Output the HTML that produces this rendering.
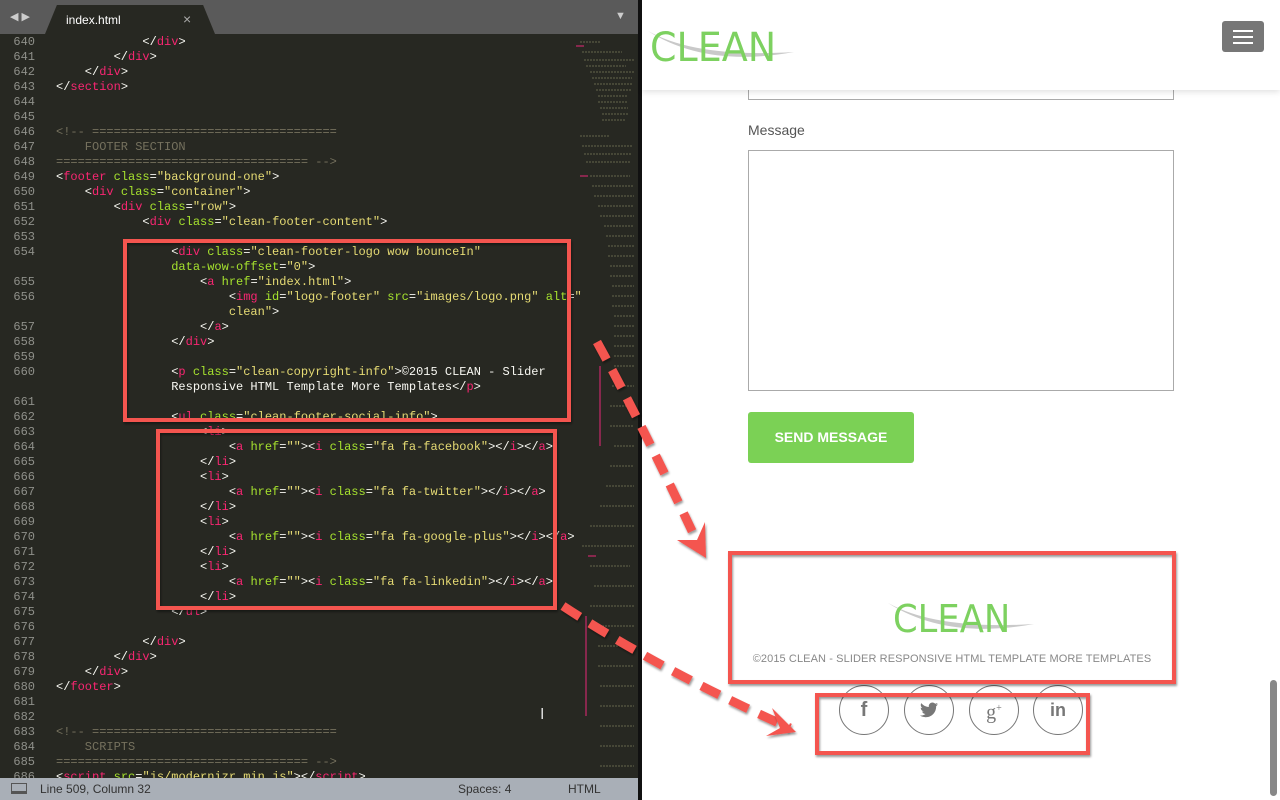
<!DOCTYPE html>
<html><head><meta charset="utf-8"><style>
*{margin:0;padding:0;box-sizing:border-box}
body{width:1280px;height:800px;overflow:hidden;position:relative;background:#fff;font-family:"Liberation Sans",sans-serif}
#ed{position:absolute;left:0;top:0;width:639px;height:800px;background:#272822}
#tabbar{position:absolute;left:0;top:0;width:639px;height:34px;background:#5a5a5a}
#tab{position:absolute;left:45px;top:5px;width:170px;height:29px;background:#272822;clip-path:polygon(7% 0,93% 0,100% 100%,0 100%);}
#tab span{position:absolute;left:21px;top:8px;color:#fff;font-size:12px}
#tab b{position:absolute;left:138px;top:6px;color:#aaa;font-size:14px;font-weight:normal}
.code{position:absolute;left:0;top:35px;font-family:"Liberation Mono",monospace;font-size:12px;line-height:15px;white-space:pre;color:#f8f8f2}
.ln{position:absolute;left:0;width:35px;text-align:right;color:#8f908a}
.tx{position:absolute;left:56px}
.t{color:#f92672}.a{color:#a6e22e}.s{color:#e6db74}.c{color:#75715e}
#status{position:absolute;left:0;top:778px;width:639px;height:22px;background:#a9afb7;font-size:12px;color:#333}
#mini{position:absolute;left:570px;top:36px;width:66px;height:740px;}
#div{position:absolute;left:638px;top:0;width:4px;height:800px;background:#111}
#hdr{position:absolute;left:642px;top:0;width:638px;height:90px;background:#fff;box-shadow:0 2px 6px rgba(0,0,0,.12);z-index:2}
.logo{position:absolute;font-family:"DejaVu Sans",sans-serif;color:#7dd160;letter-spacing:0px}
</style></head><body>
<div id="ed">
<div id="tabbar">
<div style="position:absolute;left:10px;top:10px;color:#ccc;font-size:11px">◀ ▶</div>
<div id="tab"><span>index.html</span><b>×</b></div>
<div style="position:absolute;left:615px;top:10px;color:#ccc;font-size:11px">▼</div>
</div>
<div class="code">
<div class="ln" style="top:0">640
641
642
643
644
645
646
647
648
649
650
651
652
653
654

655
656

657
658
659
660

661
662
663
664
665
666
667
668
669
670
671
672
673
674
675
676
677
678
679
680
681
682
683
684
685
686</div>
<div class="tx" style="top:0">            &lt;/<span class="t">div</span>&gt;
        &lt;/<span class="t">div</span>&gt;
    &lt;/<span class="t">div</span>&gt;
&lt;/<span class="t">section</span>&gt;


<span class="c">&lt;!-- ==================================
    FOOTER SECTION
=================================== --&gt;</span>
&lt;<span class="t">footer</span> <span class="a">class</span>=<span class="s">"background-one"</span>&gt;
    &lt;<span class="t">div</span> <span class="a">class</span>=<span class="s">"container"</span>&gt;
        &lt;<span class="t">div</span> <span class="a">class</span>=<span class="s">"row"</span>&gt;
            &lt;<span class="t">div</span> <span class="a">class</span>=<span class="s">"clean-footer-content"</span>&gt;

                &lt;<span class="t">div</span> <span class="a">class</span>=<span class="s">"clean-footer-logo wow bounceIn"</span>
                <span class="a">data-wow-offset</span>=<span class="s">"0"</span>&gt;
                    &lt;<span class="t">a</span> <span class="a">href</span>=<span class="s">"index.html"</span>&gt;
                        &lt;<span class="t">img</span> <span class="a">id</span>=<span class="s">"logo-footer"</span> <span class="a">src</span>=<span class="s">"images/logo.png"</span> <span class="a">alt</span>=<span class="s">"</span>
<span class="s">                        clean"</span>&gt;
                    &lt;/<span class="t">a</span>&gt;
                &lt;/<span class="t">div</span>&gt;

                &lt;<span class="t">p</span> <span class="a">class</span>=<span class="s">"clean-copyright-info"</span>&gt;©2015 CLEAN - Slider
                Responsive HTML Template More Templates&lt;/<span class="t">p</span>&gt;

                &lt;<span class="t">ul</span> <span class="a">class</span>=<span class="s">"clean-footer-social-info"</span>&gt;
                    &lt;<span class="t">li</span>&gt;
                        &lt;<span class="t">a</span> <span class="a">href</span>=<span class="s">""</span>&gt;&lt;<span class="t">i</span> <span class="a">class</span>=<span class="s">"fa fa-facebook"</span>&gt;&lt;/<span class="t">i</span>&gt;&lt;/<span class="t">a</span>&gt;
                    &lt;/<span class="t">li</span>&gt;
                    &lt;<span class="t">li</span>&gt;
                        &lt;<span class="t">a</span> <span class="a">href</span>=<span class="s">""</span>&gt;&lt;<span class="t">i</span> <span class="a">class</span>=<span class="s">"fa fa-twitter"</span>&gt;&lt;/<span class="t">i</span>&gt;&lt;/<span class="t">a</span>&gt;
                    &lt;/<span class="t">li</span>&gt;
                    &lt;<span class="t">li</span>&gt;
                        &lt;<span class="t">a</span> <span class="a">href</span>=<span class="s">""</span>&gt;&lt;<span class="t">i</span> <span class="a">class</span>=<span class="s">"fa fa-google-plus"</span>&gt;&lt;/<span class="t">i</span>&gt;&lt;/<span class="t">a</span>&gt;
                    &lt;/<span class="t">li</span>&gt;
                    &lt;<span class="t">li</span>&gt;
                        &lt;<span class="t">a</span> <span class="a">href</span>=<span class="s">""</span>&gt;&lt;<span class="t">i</span> <span class="a">class</span>=<span class="s">"fa fa-linkedin"</span>&gt;&lt;/<span class="t">i</span>&gt;&lt;/<span class="t">a</span>&gt;
                    &lt;/<span class="t">li</span>&gt;
                &lt;/<span class="t">ul</span>&gt;

            &lt;/<span class="t">div</span>&gt;
        &lt;/<span class="t">div</span>&gt;
    &lt;/<span class="t">div</span>&gt;
&lt;/<span class="t">footer</span>&gt;


<span class="c">&lt;!-- ==================================
    SCRIPTS
=================================== --&gt;</span>
&lt;<span class="t">script</span> <span class="a">src</span>=<span class="s">"js/modernizr.min.js"</span>&gt;&lt;/<span class="t">script</span>&gt;</div>
</div>
<svg id="mini" width="66" height="740">
<g stroke="#9a9a70" stroke-width="1" opacity=".55" stroke-dasharray="2 1">
<path d="M10 6h20M12 16h40M14 24h50M16 30h40M20 36h44M22 42h40M24 48h38M26 54h36M28 60h30M28 66h30M30 72h28M32 78h26M32 84h24M10 100h30M12 110h50M14 118h48M16 126h44M20 140h40M22 150h42M24 160h40M28 170h36M30 180h34M34 190h30M36 200h28M38 210h26M38 220h26M40 230h24M40 240h24M42 250h22M42 260h22M42 270h22M44 280h20M44 290h20M44 300h20M44 310h20M44 320h20M44 330h20M42 350h22M40 370h24M40 390h24M44 410h20M40 430h24M36 450h28M30 470h34M20 490h44M12 510h52M20 530h40M24 550h40M20 570h44M20 590h44M28 610h36M28 630h36M30 650h34M30 670h34M30 690h34M30 710h34M30 730h34"/>
</g>
<g stroke="#c8286a" stroke-width="2" opacity=".6"><path d="M6 10h8M10 140h8M30 330v80M18 520h8M16 580v100"/></g>
</svg>
<div id="status"><div style="position:absolute;left:11px;top:5px;width:16px;height:11px;border:1px solid #555;border-bottom:3px solid #555"></div><span style="position:absolute;left:40px;top:4px">Line 509, Column 32</span><span style="position:absolute;left:458px;top:4px">Spaces: 4</span><span style="position:absolute;left:568px;top:4px">HTML</span></div>
<div style="position:absolute;left:540px;top:706px;color:#ddd;font-size:16px">I</div>
</div>
<div id="div"></div>

<div id="hdr">
<svg style="position:absolute;left:4px;top:28px" width="150" height="34"><path d="M2 3 Q50 30 148 24 Q60 40 2 3Z" fill="#c9c9c9"/></svg>
<div class="logo" style="left:8px;top:25px;font-size:40px;transform:scaleX(.95);transform-origin:left">CLEAN</div>
<div style="position:absolute;left:580px;top:21px;width:42px;height:31px;background:#777;border-radius:3px">
<div style="position:absolute;left:11px;top:9px;width:20px;height:2px;background:#fff;box-shadow:0 6px 0 #fff,0 12px 0 #fff"></div></div>
</div>
<div style="position:absolute;left:748px;top:60px;width:426px;height:40px;border:1px solid #aaa"></div>
<div style="position:absolute;left:748px;top:122px;font-size:14px;color:#555">Message</div>
<div style="position:absolute;left:748px;top:150px;width:426px;height:241px;border:1px solid #aaa"></div>
<div style="position:absolute;left:748px;top:412px;width:166px;height:51px;background:#7bd155;border-radius:3px;color:#fff;font-weight:bold;font-size:14px;text-align:center;line-height:51px">SEND MESSAGE</div>

<svg style="position:absolute;left:886px;top:600px" width="150" height="34"><path d="M2 3 Q50 30 148 24 Q60 40 2 3Z" fill="#c9c9c9"/></svg>
<div class="logo" style="left:893px;top:597px;font-size:38px;transform:scaleX(.93);transform-origin:left">CLEAN</div>
<div style="position:absolute;left:728px;top:653px;width:448px;text-align:center;font-size:11px;color:#888;letter-spacing:.1px">©2015 CLEAN - SLIDER RESPONSIVE HTML TEMPLATE MORE TEMPLATES</div>

<div style="position:absolute;left:839px;top:685px;width:50px;height:50px;border:1.5px solid #777;border-radius:50%;text-align:center;line-height:48px;font-size:20px;font-weight:bold;color:#777">f</div>
<div style="position:absolute;left:904px;top:685px;width:50px;height:50px;border:1.5px solid #777;border-radius:50%"><svg style="position:absolute;left:15px;top:16px" width="18" height="16" viewBox="0 0 24 20"><path d="M24 2.4c-.9.4-1.8.6-2.8.8 1-.6 1.8-1.6 2.2-2.7-1 .6-2 1-3.1 1.2C19.3.7 18 0 16.6 0c-2.7 0-4.9 2.2-4.9 4.900 0 .4 0 .8.1 1.1C7.7 5.8 4.1 3.9 1.7.9c-.4.7-.7 1.6-.7 2.5 0 1.7.9 3.2 2.200 4.1-.8 0-1.6-.2-2.2-.6v.1c0 2.4 1.7 4.4 3.9 4.8-.4.1-.8.2-1.3.2-.3 0-.6 0-.9-.1.6 2 2.4 3.4 4.6 3.4-1.7 1.3-3.8 2.100-6.1 2.1H0c2.2 1.4 4.8 2.2 7.5 2.2 9.1 0 14-7.5 14-14v-.6c1-.7 1.8-1.6 2.5-2.6z" fill="#777"/></svg></div>
<div style="position:absolute;left:969px;top:685px;width:50px;height:50px;border:1.5px solid #777;border-radius:50%;text-align:center;line-height:46px;font-size:20px;color:#777;font-family:'Liberation Serif',serif">g<sup style="font-size:10px">+</sup></div>
<div style="position:absolute;left:1033px;top:685px;width:50px;height:50px;border:1.5px solid #777;border-radius:50%;text-align:center;line-height:48px;font-size:18px;font-weight:bold;color:#777">in</div>

<div style="position:absolute;left:1270px;top:680px;width:7px;height:116px;background:#888;border-radius:4px"></div>

<svg style="position:absolute;left:0;top:0" width="1280" height="800">
<defs><filter id="sh"><feDropShadow dx="1" dy="2" stdDeviation="1" flood-opacity=".4"/></filter></defs>
<g fill="none" stroke="#f4544f" filter="url(#sh)">
<rect x="125" y="241" width="444" height="179" stroke-width="4"/>
<rect x="158" y="431" width="397" height="177" stroke-width="4"/>
<rect x="730" y="553" width="444" height="129" stroke-width="4"/>
<rect x="817" y="695" width="271" height="58" stroke-width="4"/>
<path d="M597 342 Q640 420 700 548" stroke-width="9" stroke-dasharray="20 12"/>
<path d="M563 606 Q660 670 790 728" stroke-width="9" stroke-dasharray="20 12"/>
</g>
<g fill="#f4544f" filter="url(#sh)">
<path d="M677 540 L706 558 L705 522 L697 540Z"/>
<path d="M772 708 L796 732 L766 736 L780 728Z"/>
</g>
</svg>
</body></html>
